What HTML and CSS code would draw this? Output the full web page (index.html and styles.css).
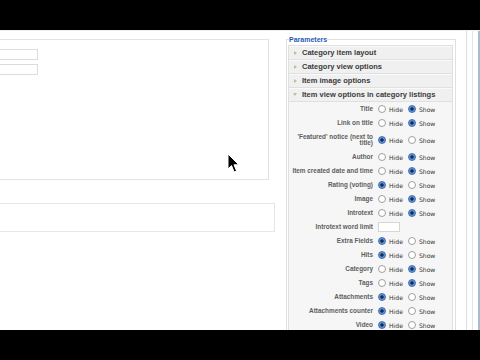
FILE: index.html
```html
<!DOCTYPE html>
<html>
<head>
<meta charset="utf-8">
<link rel="stylesheet" href="styles.css">
</head>
<body>
<div class="bar"></div>
<div class="main">
  <div class="left">
    <div class="box1">
      <div class="inp"></div>
      <div class="inp"></div>
    </div>
    <div class="box2"></div>
  </div>
  <fieldset class="params">
    <legend class="legend">Parameters</legend>
    <div class="acc">
      <div class="hdr"><span class="arr"></span>Category item layout</div>
      <div class="hdr"><span class="arr"></span>Category view options</div>
      <div class="hdr"><span class="arr"></span>Item image options</div>
      <div class="hdr open"><span class="arr down"></span>Item view options in category listings</div>
      <div class="rows">
        <div class="row"><div class="key">Title</div><div class="val"><span class="radio"></span><span class="opt">Hide</span><span class="radio on"></span><span class="opt">Show</span></div></div>
        <div class="row"><div class="key">Link on title</div><div class="val"><span class="radio"></span><span class="opt">Hide</span><span class="radio on"></span><span class="opt">Show</span></div></div>
        <div class="row tall"><div class="key">'Featured' notice (next to title)</div><div class="val"><span class="radio on"></span><span class="opt">Hide</span><span class="radio"></span><span class="opt">Show</span></div></div>
        <div class="row"><div class="key">Author</div><div class="val"><span class="radio"></span><span class="opt">Hide</span><span class="radio on"></span><span class="opt">Show</span></div></div>
        <div class="row"><div class="key">Item created date and time</div><div class="val"><span class="radio"></span><span class="opt">Hide</span><span class="radio on"></span><span class="opt">Show</span></div></div>
        <div class="row"><div class="key">Rating (voting)</div><div class="val"><span class="radio on"></span><span class="opt">Hide</span><span class="radio"></span><span class="opt">Show</span></div></div>
        <div class="row"><div class="key">Image</div><div class="val"><span class="radio"></span><span class="opt">Hide</span><span class="radio on"></span><span class="opt">Show</span></div></div>
        <div class="row"><div class="key">Introtext</div><div class="val"><span class="radio"></span><span class="opt">Hide</span><span class="radio on"></span><span class="opt">Show</span></div></div>
        <div class="row"><div class="key">Introtext word limit</div><div class="val"><span class="field"></span></div></div>
        <div class="row"><div class="key">Extra Fields</div><div class="val"><span class="radio on"></span><span class="opt">Hide</span><span class="radio"></span><span class="opt">Show</span></div></div>
        <div class="row"><div class="key">Hits</div><div class="val"><span class="radio on"></span><span class="opt">Hide</span><span class="radio"></span><span class="opt">Show</span></div></div>
        <div class="row"><div class="key">Category</div><div class="val"><span class="radio"></span><span class="opt">Hide</span><span class="radio on"></span><span class="opt">Show</span></div></div>
        <div class="row"><div class="key">Tags</div><div class="val"><span class="radio"></span><span class="opt">Hide</span><span class="radio on"></span><span class="opt">Show</span></div></div>
        <div class="row"><div class="key">Attachments</div><div class="val"><span class="radio on"></span><span class="opt">Hide</span><span class="radio"></span><span class="opt">Show</span></div></div>
        <div class="row"><div class="key">Attachments counter</div><div class="val"><span class="radio on"></span><span class="opt">Hide</span><span class="radio"></span><span class="opt">Show</span></div></div>
        <div class="row"><div class="key">Video</div><div class="val"><span class="radio on"></span><span class="opt">Hide</span><span class="radio"></span><span class="opt">Show</span></div></div>
      </div>
    </div>
  </fieldset>
  <div class="edge">
    <div class="ln l1"></div>
    <div class="ln l2"></div>
    <div class="ln l3"></div>
  </div>
  <svg class="cursor" width="14" height="21" viewBox="0 0 14 21">
    <path d="M1 1 L1 16 L4.5 12.6 L7.2 19 L9.6 18 L7 11.8 L11.8 11.8 Z" fill="#000" stroke="#fff" stroke-width="1" stroke-linejoin="round"/>
  </svg>
</div>
<div class="bar"></div>
</body>
</html>
```

FILE: styles.css
```css
html, body {
  margin: 0;
  padding: 0;
  background: #000;
}
body {
  width: 480px;
  height: 360px;
  overflow: hidden;
  font-family: "Liberation Sans", Arial, sans-serif;
}
.bar {
  height: 30px;
  background: #000;
}
.main {
  position: relative;
  height: 300px;
  background: #fff;
  display: flex;
  overflow: hidden;
  border-top: 1px solid #f0f0f0;
  box-sizing: border-box;
}
.left {
  width: 286px;
  flex: none;
}
.box1 {
  margin-top: 8px;
  width: 269px;
  height: 141px;
  border: 1px solid #e2e2e2;
  border-left: none;
  padding-top: 9px;
  box-sizing: border-box;
}
.inp {
  width: 38px;
  height: 11px;
  border: 1px solid #dcdcdc;
  border-left: none;
  box-sizing: border-box;
  margin-bottom: 4px;
}
.box2 {
  margin-top: 23px;
  width: 275px;
  height: 29px;
  border: 1px solid #e6e6e6;
  border-left: none;
  box-sizing: border-box;
}
.params {
  flex: none;
  width: 170px;
  box-sizing: border-box;
  margin: 4px 0 0 0;
  padding: 0 4px 0 1px;
  border: 1px solid #e0e0e0;
  border-bottom: none;
  min-width: 0;
}
.legend {
  padding: 0;
  margin-left: 1px;
  font-size: 7px;
  line-height: 9px;
  font-weight: bold;
  color: #1f5bb5;
}
.acc {
  width: 163px;
  margin-top: 1px;
  border: 1px solid #e0e0e0;
  border-top: none;
  background: #f6f6f6;
}
.hdr {
  height: 13px;
  line-height: 13px;
  border-top: 1px solid #e0e0e0;
  background: #f0f0f0;
  box-shadow: inset 0 1px 0 #fafafa;
  font-size: 7.5px;
  font-weight: bold;
  color: #3a3a3a;
  display: flex;
  align-items: center;
  padding-left: 4px;
}
.arr {
  width: 0;
  height: 0;
  border-top: 2.5px solid transparent;
  border-bottom: 2.5px solid transparent;
  border-left: 3px solid #b9c29a;
  margin-right: 5px;
  margin-left: 1px;
}
.arr.down {
  border-left: 2.5px solid transparent;
  border-right: 2.5px solid transparent;
  border-top: 3px solid #b9c29a;
  border-bottom: none;
  margin-left: 0;
  margin-right: 5px;
}
.rows {
  border-top: 1px solid #e0e0e0;
  padding-top: 0;
}
.row {
  display: flex;
  align-items: center;
  height: 14px;
}
.row.tall {
  height: 20px;
}
.key {
  width: 84px;
  flex: none;
  box-sizing: border-box;
  padding-left: 2px;
  text-align: right;
  font-size: 6.4px;
  line-height: 6.5px;
  font-weight: bold;
  color: #5e5e5e;
}
.val {
  display: flex;
  align-items: center;
  margin-left: 5px;
}
.radio {
  width: 8px;
  height: 8px;
  box-sizing: border-box;
  border-radius: 50%;
  border: 1px solid #a0a0a0;
  background: #fff;
  flex: none;
}
.radio.on {
  border-color: #3f6fb0;
  background: radial-gradient(circle, #1b2a48 0 1.4px, #5b93dc 1.9px);
}
.opt {
  font-family: "DejaVu Sans", Verdana, sans-serif;
  font-size: 6.1px;
  color: #333;
  margin-left: 3px;
  margin-right: 5px;
}
.field {
  width: 22px;
  height: 10px;
  box-sizing: border-box;
  border: 1px solid #d6d6d6;
  background: #fff;
}
.edge {
  flex: none;
  display: flex;
  margin-left: 10px;
}
.ln {
  width: 1px;
  height: 300px;
}
.l1 {
  background: #dedede;
  margin-right: 5px;
}
.l2 {
  background: #dfe8f0;
  margin-right: 5px;
}
.l3 {
  width: 2px;
  background: #a8bcd0;
}
.cursor {
  position: absolute;
  left: 227px;
  top: 122px;
}
```
